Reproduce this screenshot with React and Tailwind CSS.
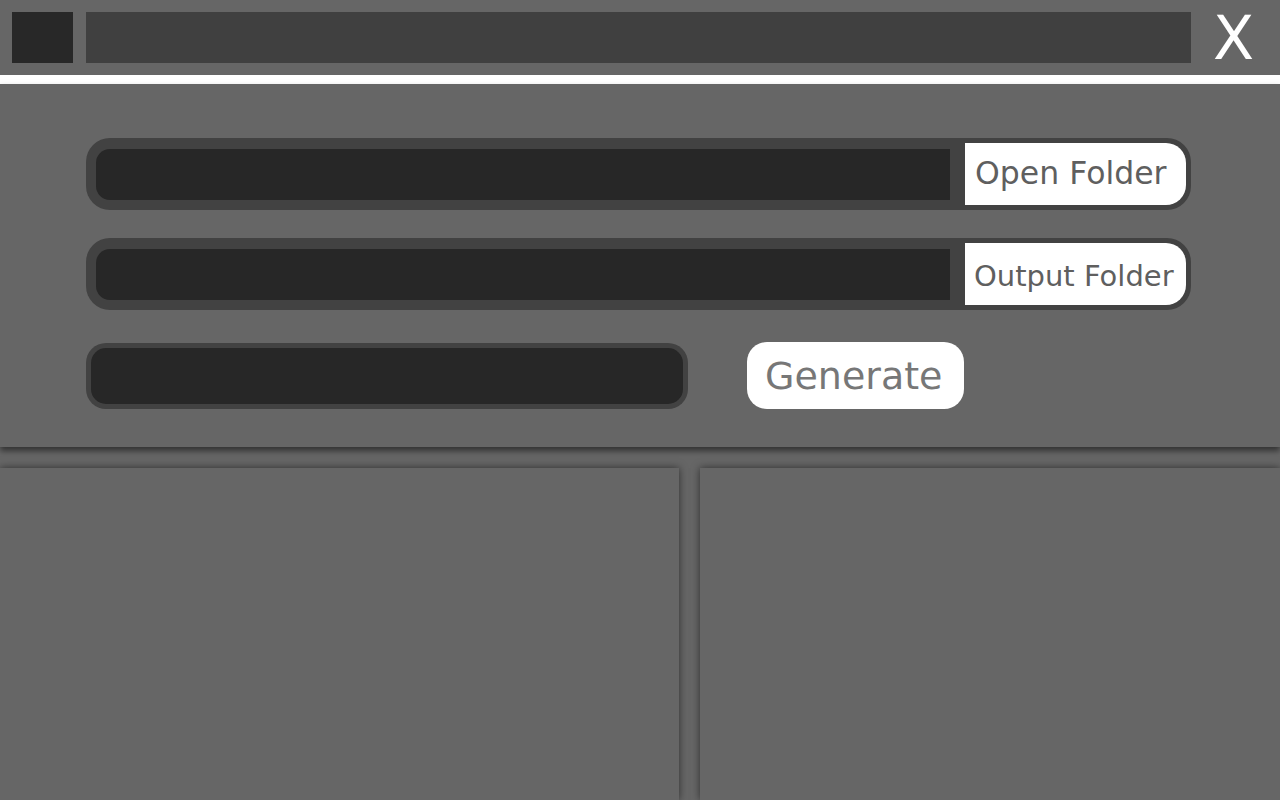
export default function App() {
  return (
    <div className="w-[1280px] h-[800px] bg-[#666666] overflow-hidden flex flex-col font-['DejaVu_Sans',sans-serif]">
      {/* title bar */}
      <div className="h-[75px] shrink-0 flex items-center pl-3">
        <div className="w-[61px] h-[51px] bg-[#282828]" />
        <div className="ml-[13px] w-[1105px] h-[51px] bg-[#404040]" />
        <div className="flex-1 flex justify-center pr-1 text-white text-[60px] leading-none">X</div>
      </div>
      <div className="h-[9px] shrink-0 bg-white" />

      {/* controls */}
      <div className="h-[363px] shrink-0 relative z-10 bg-[#666666] shadow-[0_4px_6px_rgba(0,0,0,0.5)] pl-[86px] pt-[54px] flex flex-col">
        <FolderRow label="Open Folder" size="text-[31.5px]" pad="pl-[10px]" />
        <div className="mt-[28px]">
          <FolderRow label="Output Folder" size="text-[29px] pt-[4px]" pad="pl-[9px]" />
        </div>
        <div className="mt-[32px] flex items-center">
          <div className="w-[602px] h-[66px] rounded-[20px] bg-[#424242] p-[5px]">
            <div className="w-full h-full rounded-[15px] bg-[#272727]" />
          </div>
          <button className="ml-[59px] w-[217px] h-[67px] rounded-[20px] bg-white text-[#777777] text-[38px] leading-none flex items-center pl-[18px]">
            Generate
          </button>
        </div>
      </div>

      {/* panels */}
      <div className="mt-[21px] flex-1 flex gap-[21px]">
        <div className="w-[679px] bg-[#666666] shadow-[0_0_8px_rgba(0,0,0,0.55)]" />
        <div className="flex-1 bg-[#666666] shadow-[0_0_8px_rgba(0,0,0,0.55)]" />
      </div>
    </div>
  );
}

function FolderRow({ label, size, pad }) {
  return (
    <div className="w-[1105px] h-[72px] rounded-[24px] bg-[#424242] flex items-center pl-[10px] pr-[5px]">
      <div className="w-[854px] h-[51px] rounded-l-[14px] bg-[#272727]" />
      <button
        className={
          "ml-[15px] flex-1 h-[62px] bg-white rounded-r-[20px] text-[#5f5f5f] leading-none flex items-center whitespace-nowrap " +
          size +
          " " +
          pad
        }
      >
        {label}
      </button>
    </div>
  );
}
